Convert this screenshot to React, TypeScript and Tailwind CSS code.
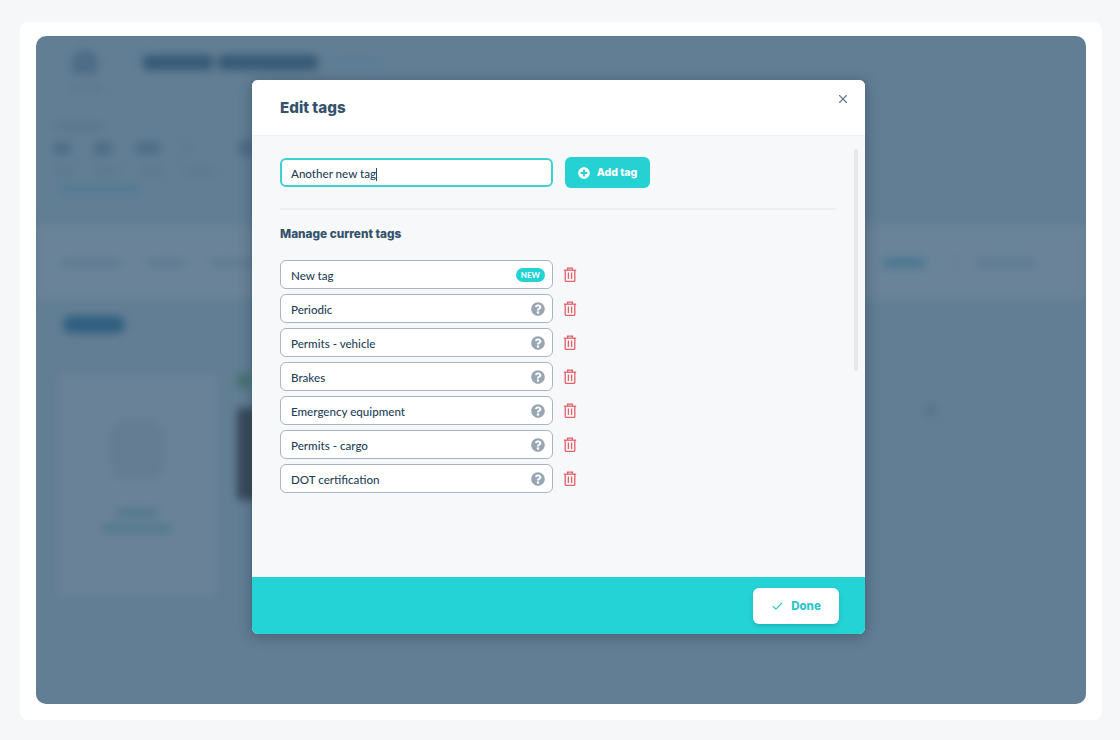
import { Check, X } from "lucide-react";
import { FaPlusCircle, FaQuestionCircle } from "react-icons/fa";

const tags = ["New tag", "Periodic", "Permits - vehicle", "Brakes", "Emergency equipment", "Permits - cargo", "DOT certification"];

function TrashIcon() {
    return (
        <svg viewBox="0 0 14 15" className="ml-[10px] h-[15px] w-[14px] text-[#e4606a]" fill="none" stroke="currentColor" strokeWidth="1.3">
            <path d="M0.8 3.2h12.4" />
            <path d="M4.6 3V1.2h4.8V3" />
            <path d="M2.2 3.2v10.2a1 1 0 0 0 1 1h7.6a1 1 0 0 0 1-1V3.2" />
            <path d="M5.4 5.6v6.4M8.6 5.6v6.4" />
        </svg>
    );
}

function BlurredPage() {
    return (
        <div className="flex h-full flex-col blur-[4.5px]">
            <div className="flex h-[86px] items-start pl-[32px] pt-[8px]">
                <div className="flex w-[34px] flex-col items-center">
                    <div className="mt-[6px] h-[24px] w-[26px] shrink-0 rounded-t-full bg-[#4d6d86]" />
                    <div className="mt-[12px] h-[5px] w-[36px] shrink-0 bg-[#5b788e]" />
                </div>
                <div className="ml-[41px] mt-[11px] h-[15px] w-[70px] rounded bg-[#375a76]" />
                <div className="ml-[5px] mt-[11px] h-[15px] w-[100px] rounded bg-[#375a76]" />
                <div className="ml-[10px] mt-[15px] h-[6px] w-[54px] bg-[#587d97]" />
            </div>
            <div className="flex h-[103px] flex-col pl-[18px] pt-[2px]">
                <div className="h-[5px] w-[50px] bg-[#56748b]" />
                <div className="mt-[12px] flex items-center gap-[24px]">
                    <div className="h-[11px] w-[16px] bg-[#4d6d86]" />
                    <div className="h-[13px] w-[18px] rounded bg-[#4d6d86]" />
                    <div className="h-[12px] w-[24px] rounded bg-[#4d6d86]" />
                    <div className="h-[10px] w-[4px] bg-[#5a778e]" />
                    <div className="ml-[26px] h-[14px] w-[18px] bg-[#4d6d86]" />
                </div>
                <div className="mt-[13px] flex gap-[20px]">
                    <div className="h-[5px] w-[20px] bg-[#5a778e]" />
                    <div className="h-[5px] w-[26px] bg-[#5a778e]" />
                    <div className="h-[5px] w-[24px] bg-[#5a778e]" />
                    <div className="h-[5px] w-[30px] bg-[#5a778e]" />
                </div>
                <div className="ml-[6px] mt-[12px] h-[8px] w-[80px] bg-[#507c95]" />
            </div>
            <div className="flex h-[75px] items-center bg-[#6a8398] pl-[24px]">
                <div className="h-[6px] w-[62px] bg-[#5b788f]" />
                <div className="ml-[24px] h-[6px] w-[40px] bg-[#5b788f]" />
                <div className="ml-[24px] h-[6px] w-[42px] bg-[#5b788f]" />
                <div className="ml-auto h-[10px] w-[42px] bg-[#4a7890]" />
                <div className="ml-[30px] h-[20px] w-[1px] bg-[#5f7b91]" />
                <div className="ml-[20px] mr-[50px] h-[10px] w-[60px] rounded bg-[#5f7c93]" />
            </div>
            <div className="flex items-center pl-[27px] pt-[16px]">
                <div className="h-[17px] w-[62px] rounded-full bg-[#2f5f80]" />
            </div>
            <div className="flex pl-[21px] pt-[41px]">
                <div className="flex h-[222px] w-[160px] flex-col items-center bg-[#6a8297] pt-[45px]">
                    <div className="h-[62px] w-[54px] rounded-[16px] bg-[#647d92]" />
                    <div className="mt-[27px] h-[9px] w-[42px] bg-[#51798f]" />
                    <div className="mt-[7px] h-[9px] w-[70px] bg-[#51798f]" />
                </div>
                <div className="ml-[20px] flex w-[30px] flex-col">
                    <div className="h-[14px] w-[14px] bg-[#44726f]" />
                    <div className="mt-[20px] h-[92px] w-[30px] bg-[#38495a]" />
                </div>
                <div className="ml-[658px] mt-[30px] size-[12px] rounded-full bg-[#587389]" />
            </div>
        </div>
    );
}

function TagRow({ name }: { name: string }) {
    return (
        <div className="flex items-center">
            <div className="flex h-[29px] w-[273px] items-center justify-between rounded-[6px] border border-[#a9b4c2] bg-white pl-[10px] pr-[7px] text-[11.6px] font-medium text-[#1f3f59]">
                <span className="pt-[3px]">{name}</span>
                {name === "New tag" ? (
                    <span className="rounded-full bg-[#22d3d3] px-[5px] text-[8px] font-bold leading-[14px] text-white">NEW</span>
                ) : (
                    <FaQuestionCircle className="text-[14px] text-[#98a6b3]" />
                )}
            </div>
            <TrashIcon />
        </div>
    );
}

export default function App() {
    return (
        <div className="h-[740px] w-[1120px] overflow-hidden bg-[#f6f7f9] pb-[20px] pl-[20px] pr-[18px] pt-[22px] font-['Lato',sans-serif]">
            <div className="h-full rounded-[8px] bg-white pb-[16px] pl-[16px] pr-[16px] pt-[14px]">
                <div className="relative h-full overflow-hidden rounded-[10px] bg-[#627e94]">
                    <BlurredPage />

                    <div className="absolute left-[216px] top-[44px] flex h-[554px] w-[613px] flex-col overflow-hidden rounded-[6px] bg-[#f6f8fa] shadow-[0_2px_14px_rgba(30,50,70,0.45)]">
                        <div className="relative flex h-[56px] shrink-0 items-center border-b border-[#eff1f4] bg-white pl-[28px] pt-[2px]">
                            <h1 className="font-['Inter',sans-serif] text-[15.2px] font-extrabold text-[#34526b]">Edit tags</h1>
                            <X className="absolute right-[15px] top-[12px] size-[14px] text-[#62798e]" />
                        </div>

                        <div className="relative flex-1 pl-[28px] pr-[29px] pt-[21px]">
                            <div className="flex items-center">
                                <div className="flex h-[29px] w-[273px] items-center rounded-[6px] border-2 border-[#3fd0d4] bg-white pl-[9px] pt-[3px] text-[11.6px] font-medium text-[#1f3f59]">
                                    Another new tag
                                    <span className="h-[13px] w-px bg-[#2f4d66]" />
                                </div>
                                <button className="ml-[12px] flex h-[31px] w-[85px] items-center justify-center gap-[7px] rounded-[6px] bg-[#26d1d3] pt-px font-['Inter',sans-serif] text-[10.5px] font-extrabold text-white">
                                    <FaPlusCircle className="text-[12px]" />
                                    Add tag
                                </button>
                            </div>
                            <div className="mt-[20px] h-[2px] bg-[#eceef1]" />
                            <h2 className="mt-[17px] font-['Inter',sans-serif] text-[11.8px] font-extrabold leading-[14px] text-[#34526b]">Manage current tags</h2>
                            <div className="mt-[19px] flex flex-col gap-[5px]">
                                {tags.map((t) => (
                                    <TagRow key={t} name={t} />
                                ))}
                            </div>
                            <div className="absolute right-[7px] top-[13px] h-[222px] w-[4px] rounded-full bg-[#e6e8eb]" />
                        </div>

                        <div className="flex h-[57px] shrink-0 items-start justify-end bg-[#24d3d5] pr-[26px] pt-[11px]">
                            <button className="flex h-[36px] w-[86px] items-center justify-center gap-[7px] rounded-[6px] bg-white pt-px font-['Inter',sans-serif] text-[11.5px] font-extrabold text-[#2cc5cc] shadow-[0_2px_4px_rgba(0,90,100,0.25)]">
                                <Check className="size-[13px]" strokeWidth={2} />
                                Done
                            </button>
                        </div>
                    </div>
                </div>
            </div>
        </div>
    );
}
